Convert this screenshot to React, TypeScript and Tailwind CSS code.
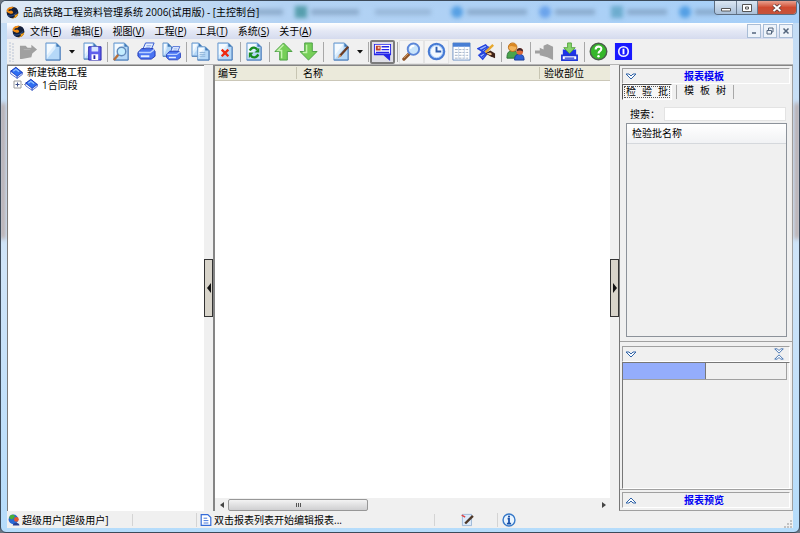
import type { ReactNode } from 'react';

const menus = [
  ['文件', 'F'],
  ['编辑', 'E'],
  ['视图', 'V'],
  ['工程', 'P'],
  ['工具', 'T'],
  ['系统', 'S'],
  ['关于', 'A'],
];

function Icon({ children, className = 'size-5' }: { children: ReactNode; className?: string }) {
  return (
    <svg viewBox="0 0 20 20" className={`${className} shrink-0`} fill="none" aria-hidden="true">
      {children}
    </svg>
  );
}

function AppLogo() {
  return (
    <Icon className="size-[13px]">
      <circle cx="10" cy="10" r="9" fill="#14203c" />
      <path d="M1 6C3 1 9 0 14 2C9 2 7 5 10 8C13 11 9 13 5 11C2 10 0 8 1 6Z" fill="#ef8a12" />
      <path d="M19 10C19 16 14 20 8 19C14 18 15 15 12 13C15 14 18 13 19 10Z" fill="#f5a21b" />
      <path d="M4 7C7 5 12 6 16 10" stroke="#14203c" strokeWidth="2" />
      <path d="M3 15C8 16 12 15 17 10" stroke="#3d6fc4" strokeWidth="1" />
    </Icon>
  );
}

function Page({ x = 2, y = 1, w = 15, h = 18 }) {
  return (
    <>
      <path
        d={`M${x} ${y}H${x + w - 4}L${x + w} ${y + 4}V${y + h}H${x}Z`}
        fill="#b5d8f8"
        stroke="#6f9acb"
      />
      <path d={`M${x + 1} ${y + h - 1}V${y + 1}H${x + w - 5}V${y + 6}Z`} fill="#dceefd" />
      <path d={`M${x + 1} ${y + 1}H${x + w - 5}L${x + 1} ${y + h - 5}Z`} fill="#f4faff" />
      <path d={`M${x + w - 4} ${y}V${y + 4}H${x + w}Z`} fill="#3f78b5" />
      <path d={`M${x + w} ${y + 4}V${y + h}H${x}`} stroke="#4f80bb" />
    </>
  );
}

function Printer() {
  return (
    <>
      <path d="M6 8L9 1H18L15 8Z" fill="#e6f0ff" stroke="#3157cf" />
      <path d="M1 11L5 7H17L19 10V15L15 18H4L1 15Z" fill="#4a74f2" stroke="#1e35b4" />
      <path d="M2 11H14L18 8" stroke="#b9d0ff" strokeWidth="1.500" />
      <path d="M4 15H13" stroke="#e3edff" strokeWidth="2" />
      <path d="M10 4H15M9 6H14" stroke="#7d9bea" />
    </>
  );
}

function Lens() {
  return (
    <>
      <path d="M8 12L2 18" stroke="#8f5426" strokeWidth="3.500" strokeLinecap="round" />
      <path d="M7 12L2 17" stroke="#d99a5e" />
      <circle cx="12" cy="7.500" r="6" fill="#c9e4fb" stroke="#5c86d8" strokeWidth="2" />
      <path d="M9 7C9 5 11 4 13 4" stroke="#fff" strokeWidth="2" />
    </>
  );
}

function Book() {
  return (
    <Icon className="size-[13px]">
      <path d="M1 8L9 2L19 10L11 17Z" fill="#2f6ef2" stroke="#1233b8" strokeWidth="1.500" />
      <path d="M1 8V12L11 19V16Z" fill="#fff" stroke="#1233b8" />
      <path d="M11 19V16L19 10V13Z" fill="#dfe9ff" stroke="#1233b8" />
      <path d="M5 8L9 5L14 9" stroke="#8fc1ff" strokeWidth="2" />
    </Icon>
  );
}

function People() {
  return (
    <>
      <path d="M1 17C1 11 3 9 7 9C11 9 13 12 13 17Z" fill="#4aa44c" stroke="#2b7038" />
      <circle cx="7" cy="5.500" r="4.500" fill="#f3b35a" stroke="#b96f1a" />
      <path d="M3 5C3 1 11 0 11 5C8 5 6 3 3 5Z" fill="#d98722" />
      <path d="M9 19C9 14 11 13 14 13C18 13 19 15 19 19Z" fill="#2c5fd5" stroke="#193c96" />
      <circle cx="14.500" cy="10" r="3.500" fill="#dc6b3b" />
      <path d="M11 10C11 5 18 5 18 10C16 9 13 8 11 10Z" fill="#44272c" />
    </>
  );
}

function Tool({
  label,
  children,
  className = '',
}: {
  label: string;
  children: ReactNode;
  className?: string;
}) {
  return (
    <button
      aria-label={label}
      className={`flex h-6 w-[25px] shrink-0 items-center justify-center ${className}`}
    >
      <Icon className="size-[19px]">{children}</Icon>
    </button>
  );
}

function Drop({ label, className = '' }: { label: string; className?: string }) {
  return (
    <button aria-label={label} className={`flex h-6 w-3 shrink-0 items-center justify-center ${className}`}>
      <svg viewBox="0 0 6 4" className="h-1 w-1.5">
        <path d="M0 0H6L3 3.500Z" fill="#111" />
      </svg>
    </button>
  );
}

function Sep({ className = '' }: { className?: string }) {
  return (
    <div className={`flex w-1 shrink-0 justify-center ${className}`}>
      <div className="h-5 w-px bg-[#a8a8a8]" />
    </div>
  );
}

function Toolbar() {
  return (
    <div className="flex h-[26px] shrink-0 items-center overflow-hidden border-b border-[#b4b4b4] bg-[#f0f0f0]">
      <svg className="mr-0.5 ml-0.5 h-5 w-[5px] shrink-0" viewBox="0 0 5 20" aria-hidden="true">
        <path d="M1 0V20M4 1V20" stroke="#bac4d6" strokeDasharray="2 1" />
      </svg>
      <Tool label="打开">
        <path d="M1 4H7L9 6H13V3L19 8L14 12L13 16L3 18H1Z" fill="#a0a0a0" />
        <path d="M5 8H12" stroke="#b4b4b4" />
      </Tool>
      <Tool label="新建">
        <Page />
      </Tool>
      <Drop label="新建选项" className="mr-0.5" />
      <Tool label="保存">
        <Page x={1} y={1} w={14} h={17} />
        <path d="M6 5H19V19H6Z" fill="#5f60ec" stroke="#2724ad" />
        <path d="M9 5H16V10H9Z" fill="#d9e5ff" />
        <path d="M9 13H16V19H9Z" fill="#fff" />
        <path d="M11 14H13V18H11Z" fill="#2724ad" />
      </Tool>
      <Sep />
      <Tool label="预览">
        <Page />
        <path d="M7 13L2 19" stroke="#b96f39" strokeWidth="2.500" />
        <circle cx="10" cy="10" r="4.500" fill="#c4edff" stroke="#648bbb" strokeWidth="1.500" />
      </Tool>
      <Tool label="打印">
        <Printer />
      </Tool>
      <Tool label="批量打印">
        <Page x={1} y={1} w={9} h={14} />
        <g transform="translate(4 4) scale(.82)">
          <Printer />
        </g>
      </Tool>
      <Sep />
      <Tool label="复制">
        <Page x={1} y={1} w={11} h={14} />
        <Page x={7} y={5} w={12} h={14} />
        <path d="M9 11H15M9 13H15M9 15H15" stroke="#8db2d8" />
      </Tool>
      <Tool label="删除">
        <Page />
        <path d="M6 8L13 15M13 8L6 15" stroke="#ed2a13" strokeWidth="2.500" />
      </Tool>
      <Sep />
      <Tool label="刷新">
        <Page />
        <path d="M5 9C7 5 11 5 13 8" stroke="#168b20" strokeWidth="2.500" />
        <path d="M15 6V11H10Z" fill="#168b20" />
        <path d="M14 13C12 17 8 17 6 14" stroke="#168b20" strokeWidth="2.500" />
        <path d="M4 17V11H9Z" fill="#168b20" />
      </Tool>
      <Sep />
      <Tool label="上移">
        <path d="M10 1L19 10H14V19H6V10H1Z" fill="#76cf58" stroke="#4b9f43" />
        <path d="M10 3L4 9H8V17" stroke="#c5f3ae" strokeWidth="1.500" />
      </Tool>
      <Tool label="下移">
        <path d="M10 19L19 10H14V1H6V10H1Z" fill="#76cf58" stroke="#4b9f43" />
        <path d="M8 3V11H4" stroke="#c5f3ae" strokeWidth="1.500" />
      </Tool>
      <Sep className="mr-1" />
      <Tool label="编辑">
        <Page />
        <path d="M8 15L17 5" stroke="#6b3b24" strokeWidth="2.500" />
        <path d="M6 17L10 15L8 13Z" fill="#d69b64" />
      </Tool>
      <Drop label="编辑选项" />
      <Sep />
      <Tool label="消息" className="rounded-xs border-2 border-[#7c7c7c] bg-[#dedee6]">
        <path d="M1 2H19V14H18V20L11 14H1Z" fill="#2525e8" />
        <path d="M2 3H18V12H2Z" fill="#fff" />
        <path d="M3 4H8V9H3Z" fill="#ba4030" />
        <path d="M5 5H7V7H5Z" fill="#ffd0a8" />
        <path d="M9 5H17M9 8H17M3 11H17" stroke="#2525e8" strokeWidth="1.500" />
      </Tool>
      <Sep />
      <Tool label="查找" className="border border-[#e4e4e4] bg-[#f4f4f4]">
        <Lens />
      </Tool>
      <Tool label="时间" className="border border-[#e4e4e4] bg-[#f4f4f4]">
        <circle cx="10" cy="10" r="8" fill="#f3f9ff" stroke="#477bd4" strokeWidth="2.500" />
        <circle cx="10" cy="10" r="6.500" stroke="#a9ccfb" />
        <path d="M10 5V10H15" stroke="#305faf" strokeWidth="2" />
      </Tool>
      <Tool label="表格">
        <path d="M1 1H19V19H1Z" fill="#fff" stroke="#6c91c6" />
        <path d="M1 1H19V5H1Z" fill="#477ed4" />
        <path d="M3 8H17M3 11H17M3 14H17M3 17H17" stroke="#9faec3" strokeDasharray="3 1" />
        <path d="M7 5V19M13 5V19" stroke="#cbd9eb" />
      </Tool>
      <Tool label="签名">
        <path d="M1 7L9 3L11 5L4 9L10 13L6 18L2 14L8 11Z" fill="#9bb8ff" stroke="#2443dd" strokeWidth="1.500" />
        <path d="M3 13L13 5M5 16L11 11" stroke="#2443dd" strokeWidth="1.500" />
        <path d="M9 11L17 3" stroke="#e7a82d" strokeWidth="2.500" />
        <path d="M9 12L14 9L19 12V17L14 15Z" fill="#3d2218" />
        <path d="M10 12L14 11L16 13L14 14Z" fill="#f0c08c" />
      </Tool>
      <Sep />
      <Tool label="用户">
        <People />
      </Tool>
      <Sep />
      <Tool label="连接">
        <path d="M0 9H5V6L9 8V4L13 2L19 5V19L13 16L5 14V12H0Z" fill="#a0a0a0" />
      </Tool>
      <Tool label="导入">
        <path d="M3 8H17V14H3Z" fill="#1d34e9" />
        <path d="M2 14H18V19H2Z" fill="#fff" stroke="#2037d6" strokeWidth="1.800" />
        <path d="M5 17H15" stroke="#2037d6" strokeWidth="1.500" />
        <path d="M8 1H12V6H16L10 12L4 6H8Z" fill="#88d66d" stroke="#55a43f" />
      </Tool>
      <Sep />
      <Tool label="帮助">
        <circle cx="10" cy="10" r="8.700" fill="#35b72a" stroke="#4b5d4b" strokeWidth="1.500" />
        <path d="M7 8C7 4 13 4 13 7C13 10 10 9 10 12" stroke="#fff" strokeWidth="2.200" />
        <circle cx="10" cy="15" r="1.300" fill="#fff" />
      </Tool>
      <Tool label="退出">
        <path d="M1 1H19V19H1Z" fill="#1818ff" />
        <circle cx="10" cy="10" r="5" stroke="#eef" strokeWidth="1.800" />
        <path d="M10 7V13" stroke="#fff" strokeWidth="2" />
      </Tool>
    </div>
  );
}

function Chevron({ up = false, className = 'h-[7px]' }: { up?: boolean; className?: string }) {
  return (
    <svg viewBox="0 0 12 7" className={`w-3 ${className}`} fill="none" aria-hidden="true">
      <path
        d={up ? 'M1 6L6 1L11 6H8L6 4L4 6Z' : 'M1 1L6 6L11 1H8L6 3L4 1Z'}
        fill="#fff"
        stroke="#2f63a8"
      />
    </svg>
  );
}

function PanelBar({ title, up = false, pair = false }: { title?: string; up?: boolean; pair?: boolean }) {
  return (
    <div className="flex h-4 shrink-0 items-center border border-t-[#a0a0a0] border-r-white border-b-white border-l-[#a0a0a0] px-0.5">
      <button aria-label={up ? '展开' : '折叠'}>
        <Chevron up={up} />
      </button>
      {title && <h2 className="flex-1 pr-4 text-center font-bold text-[#0000f5]">{title}</h2>}
      {pair && (
        <button aria-label="全部折叠" className="mr-0.5 ml-auto flex flex-col">
          <Chevron className="h-1.5" />
          <Chevron up className="h-1.5" />
        </button>
      )}
    </div>
  );
}

function Splitter({ right = false }: { right?: boolean }) {
  return (
    <div className="flex w-[9px] shrink-0 items-center bg-[#f0f0f0]">
      <button
        aria-label={right ? '隐藏右侧' : '隐藏左侧'}
        className="flex h-[58px] w-full items-center justify-center border border-[#333] bg-[#d8d4ca]"
      >
        <svg viewBox="0 0 4 10" className="h-2.5 w-1">
          <path d={right ? 'M0 0L4 5L0 10Z' : 'M4 0L0 5L4 10Z'} fill="#111" />
        </svg>
      </button>
    </div>
  );
}

function TitleBar() {
  return (
    <header className="relative flex h-[22px] shrink-0 items-center gap-1 overflow-hidden bg-linear-to-r from-[#dfeaf5] via-[#b3d2f3] via-35% to-[#a6cff8] pr-0.5 pl-[5px]">
      {/* tabs of the window behind, seen through the glass */}
      <div className="absolute inset-y-0 left-[254px] flex items-center gap-8 opacity-60 blur-[2px]" aria-hidden="true">
        <div className="h-1.5 w-7 bg-[#7795b5]" />
        <div className="-ml-5 flex items-center gap-1">
          <div className="size-3 bg-[#1a7d80]" />
          <div className="h-1.5 w-12 bg-[#7795b5]" />
        </div>
        <div className="-ml-4 h-1.5 w-14 bg-[#8aa8c9]" />
        <div className="-ml-3 flex items-center gap-1">
          <div className="size-3 rounded-full bg-[#1c80d8]" />
          <div className="h-1.5 w-15 bg-[#7795b5]" />
        </div>
        <div className="-ml-5 flex items-center gap-1">
          <div className="size-3 rounded-full bg-[#3f86e4]" />
          <div className="h-1.5 w-10 bg-[#7795b5]" />
        </div>
        <div className="-ml-4 flex items-center gap-1">
          <div className="size-3 bg-[#4595b5]" />
          <div className="h-1.5 w-10 bg-[#7795b5]" />
        </div>
        <div className="-ml-5 flex items-center gap-1">
          <div className="size-3 rounded-full bg-[#1c80d8]" />
          <div className="h-1.5 w-6 bg-[#7795b5]" />
        </div>
      </div>
      <AppLogo />
      <h1 className="relative text-[10px] whitespace-nowrap text-black">
        品高铁路工程资料管理系统 2006(试用版) - [主控制台]
      </h1>
      <div className="relative ml-auto flex h-3.5 self-start overflow-hidden rounded-b-sm border border-t-0 border-[#5d6d80]">
        <button aria-label="最小化" className="flex w-[22px] items-center justify-center border-r border-[#6d7d90] bg-linear-to-b from-[#dbe7f3] to-[#a9bfd8]">
          <svg viewBox="0 0 10 8" className="h-2 w-2.5">
            <path d="M.5 4.500H9.500V7H.5Z" fill="#fff" stroke="#555" />
          </svg>
        </button>
        <button aria-label="最大化" className="flex w-[21px] items-center justify-center border-r border-[#6d7d90] bg-linear-to-b from-[#dbe7f3] to-[#a9bfd8]">
          <svg viewBox="0 0 10 8" className="h-2 w-2.5">
            <path d="M.5 .5H9.500V7.500H.5ZM3.500 3H6.500V5H3.500Z" fill="#fff" stroke="#555" />
          </svg>
        </button>
        <button aria-label="关闭" className="flex w-[38px] items-center justify-center bg-linear-to-b from-[#e8a08f] via-[#cf4a30] to-[#c4533c]">
          <svg viewBox="0 0 10 8" className="h-2 w-2.5">
            <path d="M1.500 1L8.500 7M8.500 1L1.500 7" stroke="#5c3a3a" strokeWidth="3.500" />
            <path d="M1.500 1L8.500 7M8.500 1L1.500 7" stroke="#fff" strokeWidth="2" />
          </svg>
        </button>
      </div>
    </header>
  );
}

function MenuBar() {
  const box = 'flex size-3.5 items-center justify-center border border-[#a9bdd6] bg-[#eef3fa]';
  return (
    <nav className="flex h-4 shrink-0 items-center bg-linear-to-b from-white via-[#e4e8f5] to-[#d5dbee] pl-[5px]">
      <AppLogo />
      <div className="ml-[5px] flex gap-2.5">
        {menus.map(([name, key]) => (
          <button key={key} className="whitespace-nowrap">
            {name}(<u>{key}</u>)
          </button>
        ))}
      </div>
      <div className="ml-auto flex gap-0.5">
        <button aria-label="最小化子窗口" className={box}>
          <svg viewBox="0 0 8 8" className="size-2">
            <path d="M2 6H6" stroke="#53657d" strokeWidth="1.500" />
          </svg>
        </button>
        <button aria-label="还原子窗口" className={box}>
          <svg viewBox="0 0 8 8" className="size-2" fill="none">
            <path d="M2.500 3V1H7V5H5.500M1 3.500H5.500V7H1Z" stroke="#53657d" />
          </svg>
        </button>
        <button aria-label="关闭子窗口" className={box}>
          <svg viewBox="0 0 8 8" className="size-2">
            <path d="M1.500 1.500L6.500 6.500M6.500 1.500L1.500 6.500" stroke="#53657d" strokeWidth="1.500" />
          </svg>
        </button>
      </div>
    </nav>
  );
}

function Tree() {
  return (
    <aside className="w-[197px] shrink-0 border-t border-l border-[#7b7b7b] bg-white pl-0.5">
      <div className="flex h-3 items-center gap-1">
        <Book />
        <span>新建铁路工程</span>
      </div>
      <div className="flex h-[13px] items-center pl-[3px]">
        <button aria-label="展开合同段">
          <svg viewBox="0 0 9 9" className="size-[9px]" fill="none">
            <path d="M1 1H8V8H1Z" fill="#fff" stroke="#9a9a9a" />
            <path d="M2.500 4.500H6.500M4.500 2.500V6.500" stroke="#3d4f86" />
          </svg>
        </button>
        <div className="w-[3px] border-t border-dotted border-[#999]" />
        <Book />
        <span className="pl-1">1合同段</span>
      </div>
    </aside>
  );
}

function Reports() {
  return (
    <main className="flex min-w-0 flex-1 flex-col border-t border-l-2 border-[#858585] bg-white">
      <table className="w-full table-fixed border-b border-[#cbc7b8] bg-[#ebeadb] text-left">
        <thead>
          <tr className="h-3.5">
            <th className="w-[81px] p-0 pl-[3px] font-normal">编号</th>
            <th className="p-0 font-normal">
              <div className="border-l border-[#c7c5b2] pl-1.5">名称</div>
            </th>
            <th className="w-[71px] p-0 font-normal">
              <div className="border-l border-[#c7c5b2] pl-1">验收部位</div>
            </th>
          </tr>
        </thead>
      </table>
      <div className="flex-1" />
      <div className="flex h-[13px] shrink-0 items-center bg-[#f0f0f0]">
        <button aria-label="向左滚动" className="flex w-[13px] justify-center">
          <svg viewBox="0 0 4 6" className="h-1.5 w-1">
            <path d="M4 0L0 3L4 6Z" fill="#444" />
          </svg>
        </button>
        <div className="flex-1">
          <div className="flex h-3 w-[38%] items-center justify-center gap-px rounded-xs border border-[#979797] bg-linear-to-b from-[#f3f3f3] to-[#cfcfd1]">
            <i className="h-1 w-px bg-[#555]" />
            <i className="h-1 w-px bg-[#555]" />
            <i className="h-1 w-px bg-[#555]" />
          </div>
        </div>
        <button aria-label="向右滚动" className="flex w-[13px] justify-center">
          <svg viewBox="0 0 4 6" className="h-1.5 w-1">
            <path d="M0 0L4 3L0 6Z" fill="#444" />
          </svg>
        </button>
      </div>
    </main>
  );
}

function Templates() {
  return (
    <aside className="flex w-[174px] shrink-0 flex-col border border-r-[#a0a0a0] border-b-[#a0a0a0] border-l-[#777] border-t-[#858585] bg-[#f0f0f0]">
      <section className="flex min-h-0 flex-1 flex-col border-b border-[#a0a0a0] px-0.5 pt-0.5 pb-1">
        <PanelBar title="报表模板" />
        <div className="flex h-4 shrink-0 items-center font-['Liberation_Mono','Noto_Sans_CJK_SC',monospace]">
          <button className="h-4 border border-t-[#555] border-r-white border-b-white border-l-[#555] bg-[#f7f7f7] p-px leading-3">
            <span className="block h-3 border border-dotted border-[#555] px-px leading-3">检 验 批</span>
          </button>
          <div className="ml-1 h-3.5 w-px bg-[#a8a8a8]" />
          <button className="px-[7px] leading-3">模 板 树</button>
          <div className="h-3.5 w-px bg-[#a8a8a8]" />
        </div>
        <div className="flex h-[23px] shrink-0 items-center gap-1 pt-1 pr-1 pl-2">
          <label htmlFor="search" className="whitespace-nowrap">搜索：</label>
          <input id="search" className="h-3.5 min-w-0 flex-1 border border-[#e3e3e3] bg-white px-1 outline-none" />
        </div>
        <div className="mr-[3px] ml-1 flex-1 border border-[#8c929a]">
          <table className="w-full bg-linear-to-b from-white to-[#f1f2f4] text-left">
            <thead>
              <tr className="h-[19px] border-b border-[#d5d8dc]">
                <th className="p-0 pl-[5px] font-normal">检验批名称</th>
              </tr>
            </thead>
          </table>
        </div>
      </section>
      <section className="flex h-[148px] shrink-0 flex-col border-b border-[#a0a0a0] px-0.5 pt-1">
        <PanelBar pair />
        <div className="flex-1 border border-t-[#777] border-r-white border-b-white border-l-[#777]">
          <div className="mr-0.5 flex h-[17px] border border-t-0 border-l-0 border-[#a0a0a0]">
            <div className="w-[51%] border-r border-[#777] bg-[#94adfc]" />
          </div>
        </div>
      </section>
      <section className="shrink-0 px-0.5 py-0.5">
        <PanelBar title="报表预览" up />
      </section>
    </aside>
  );
}

function StatusBar() {
  return (
    <footer className="flex h-[17px] shrink-0 items-center bg-[#f0f0f0] pl-px">
      <div className="flex w-[125px] items-center gap-0.5 border-r border-[#d4d4d4]">
        <Icon className="size-3">
          <circle cx="9" cy="9" r="8" fill="#2867d6" />
          <path d="M3 3C6 0 11 1 12 4L7 9L2 7Z" fill="#49ae38" />
          <circle cx="14" cy="9" r="4" fill="#e5572d" />
          <path d="M8 19C8 13 19 13 19 19Z" fill="#283e91" />
        </Icon>
        <span className="whitespace-nowrap">超级用户[超级用户]</span>
      </div>
      <div className="h-3.5 w-16 border-r border-[#d4d4d4]" />
      <div className="flex w-[238px] items-center gap-0.5 border-r border-[#d4d4d4] pl-[3px]">
        <Icon className="size-3">
          <path d="M2 1H13L18 6V19H2Z" fill="#fff" stroke="#356cd8" strokeWidth="2" />
          <path d="M6 7H12M6 11H14M6 15H14" stroke="#356cd8" strokeWidth="1.500" />
        </Icon>
        <span className="whitespace-nowrap">双击报表列表开始编辑报表...</span>
      </div>
      <div className="flex h-3.5 w-[63px] items-center justify-center border-r border-[#d4d4d4] pl-1">
        <Icon className="size-3.5">
          <path d="M2 2H15V18H2Z" fill="#dceafb" stroke="#85a6cd" />
          <path d="M1 3L6 6" stroke="#d44" strokeWidth="2" />
          <path d="M6 15L17 4" stroke="#4f3828" strokeWidth="3.500" />
        </Icon>
      </div>
      <Icon className="ml-1 size-3.5">
        <circle cx="10" cy="10" r="8.500" fill="#e8f4ff" stroke="#3779c8" strokeWidth="2" />
        <path d="M8 8H10V15M7 15H13" stroke="#174fa8" strokeWidth="2.500" />
        <circle cx="10" cy="5" r="1.500" fill="#174fa8" />
      </Icon>
      <svg viewBox="0 0 8 8" className="mr-px ml-auto size-2 self-end" aria-hidden="true">
        <path d="M6 0H8V2H6ZM3 3H5V5H3ZM6 3H8V5H6ZM0 6H2V8H0ZM3 6H5V8H3ZM6 6H8V8H6Z" fill="#c2c2c2" />
      </svg>
    </footer>
  );
}

export default function App() {
  return (
    <div className="h-screen bg-[#6b7683] font-['Open_Sans','Noto_Sans_CJK_SC',sans-serif] text-[10px] leading-3 text-black">
      <div className="flex h-full flex-col overflow-hidden rounded-md border border-[#3c4a5a] bg-linear-to-b from-[#c3dcf5] via-[#cfe4f8] to-[#b5dcfb] pb-1">
        <TitleBar />
        <div className="relative flex min-h-0 flex-1 flex-col px-1.5">
          <div className="absolute top-20 left-0 h-34 w-1 bg-[#a5715a] opacity-60 blur-[2px]" />
          <div className="absolute top-20 right-0 h-34 w-1 bg-[#a5715a] opacity-60 blur-[2px]" />
          <MenuBar />
          <Toolbar />
          <div className="flex min-h-0 flex-1 bg-[#f0f0f0]">
            <Tree />
            <Splitter />
            <Reports />
            <Splitter right />
            <Templates />
          </div>
          <StatusBar />
        </div>
      </div>
    </div>
  );
}
